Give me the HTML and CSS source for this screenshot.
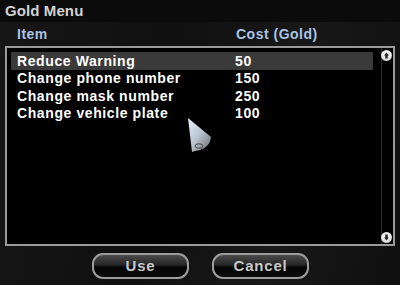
FILE: index.html
```html
<!DOCTYPE html>
<html lang="en">
<head>
    <meta charset="UTF-8">
    <title>Gold Menu</title>
    <link rel="stylesheet" href="styles.css">
</head>
<body>
    <div class="window">
        <div class="titlebar">Gold Menu</div>

        <div class="headers">
            <span class="col-item">Item</span>
            <span class="col-cost">Cost (Gold)</span>
        </div>

        <div class="listbox">
            <div class="rows">
                <div class="row selected"><span class="name">Reduce Warning</span><span class="cost">50</span></div>
                <div class="row"><span class="name">Change phone number</span><span class="cost">150</span></div>
                <div class="row"><span class="name">Change mask number</span><span class="cost">250</span></div>
                <div class="row"><span class="name">Change vehicle plate</span><span class="cost">100</span></div>
            </div>
            <div class="scrollbar">
                <div class="arrow up">
                    <svg width="11" height="11" viewBox="0 0 11 11"><path d="M5.5 2.5 L8 5.5 H6.8 V8.5 H4.2 V5.5 H3 Z" fill="#2a2a2a"/></svg>
                </div>
                <div class="arrow down">
                    <svg width="11" height="11" viewBox="0 0 11 11"><path d="M5.5 8.5 L8 5.5 H6.8 V2.5 H4.2 V5.5 H3 Z" fill="#2a2a2a"/></svg>
                </div>
            </div>
        </div>

        <div class="buttons">
            <div class="btn">Use</div>
            <div class="btn">Cancel</div>
        </div>

        <!-- mouse pointer in the capture -->
        <svg class="cursor" width="28" height="38" viewBox="0 0 28 38">
            <defs>
                <linearGradient id="cg" x1="0" y1="0" x2="1" y2="1">
                    <stop offset="0" stop-color="#e8f0ff"/>
                    <stop offset="0.5" stop-color="#b8c4d0"/>
                    <stop offset="1" stop-color="#6a6a6a"/>
                </linearGradient>
            </defs>
            <path d="M2 2 L25 21 Q24 31 14 34 Q8 35 6 36 Z" fill="url(#cg)"/>
            <ellipse cx="13" cy="30" rx="4" ry="2.2" fill="none" stroke="#444" stroke-width="1"/>
        </svg>
    </div>
</body>
</html>
```

FILE: styles.css
```css
* {
    margin: 0;
    padding: 0;
    box-sizing: border-box;
}

body {
    width: 400px;
    height: 285px;
    overflow: hidden;
    background: #121212;
    font-family: 'Liberation Sans', Arial, sans-serif;
    font-weight: bold;
}

.window {
    position: relative;
    width: 400px;
    height: 285px;
    background: linear-gradient(100deg, #161616 0%, #101010 40%, #181818 70%, #0f0f0f 100%);
}

.titlebar {
    height: 22px;
    line-height: 22px;
    padding-left: 5px;
    font-size: 15px;
    color: #d2d2d2;
    background: #0b0b0b;
    letter-spacing: 0.1px;
}

.headers {
    display: flex;
    height: 24px;
    align-items: center;
    font-size: 14px;
    color: #a9c3e6;
    letter-spacing: 0.5px;
}

.col-item {
    width: 236px;
    padding-left: 17px;
}

.listbox {
    display: flex;
    margin-left: 5px;
    width: 390px;
    height: 200px;
    background: #000;
    border: 2px solid #9a9a9a;
}

.rows {
    flex: 1;
    padding: 4px 8px 0 4px;
}

.row {
    display: flex;
    height: 17.5px;
    align-items: center;
    font-size: 14px;
    color: #fff;
    letter-spacing: 0.6px;
}

.row.selected {
    background: #3a3a3a;
}

.name {
    width: 224px;
    padding-left: 6px;
}

.scrollbar {
    display: flex;
    flex-direction: column;
    justify-content: space-between;
    width: 11px;
    margin-right: 1px;
    padding: 2px 0 1px;
    border-left: 1px solid #2c2c2c;
}

.arrow {
    width: 11px;
    height: 11px;
    border-radius: 50%;
    background: radial-gradient(circle at 50% 40%, #ffffff 0%, #e6e6e6 55%, #9a9a9a 100%);
    margin-left: -1px;
}

.arrow svg {
    display: block;
}

.buttons {
    display: flex;
    justify-content: center;
    gap: 23px;
    margin-top: 7px;
    padding-left: 1px;
}

.btn {
    width: 97px;
    height: 26px;
    line-height: 22px;
    text-align: center;
    font-size: 15px;
    color: #c8c8c8;
    letter-spacing: 0.8px;
    border: 2px solid #9c9c9c;
    border-radius: 11px;
    background: linear-gradient(to bottom, #4a4a4a 0%, #262626 45%, #050505 55%, #0c0c0c 100%);
}

.cursor {
    position: absolute;
    left: 186px;
    top: 116px;
}
```
